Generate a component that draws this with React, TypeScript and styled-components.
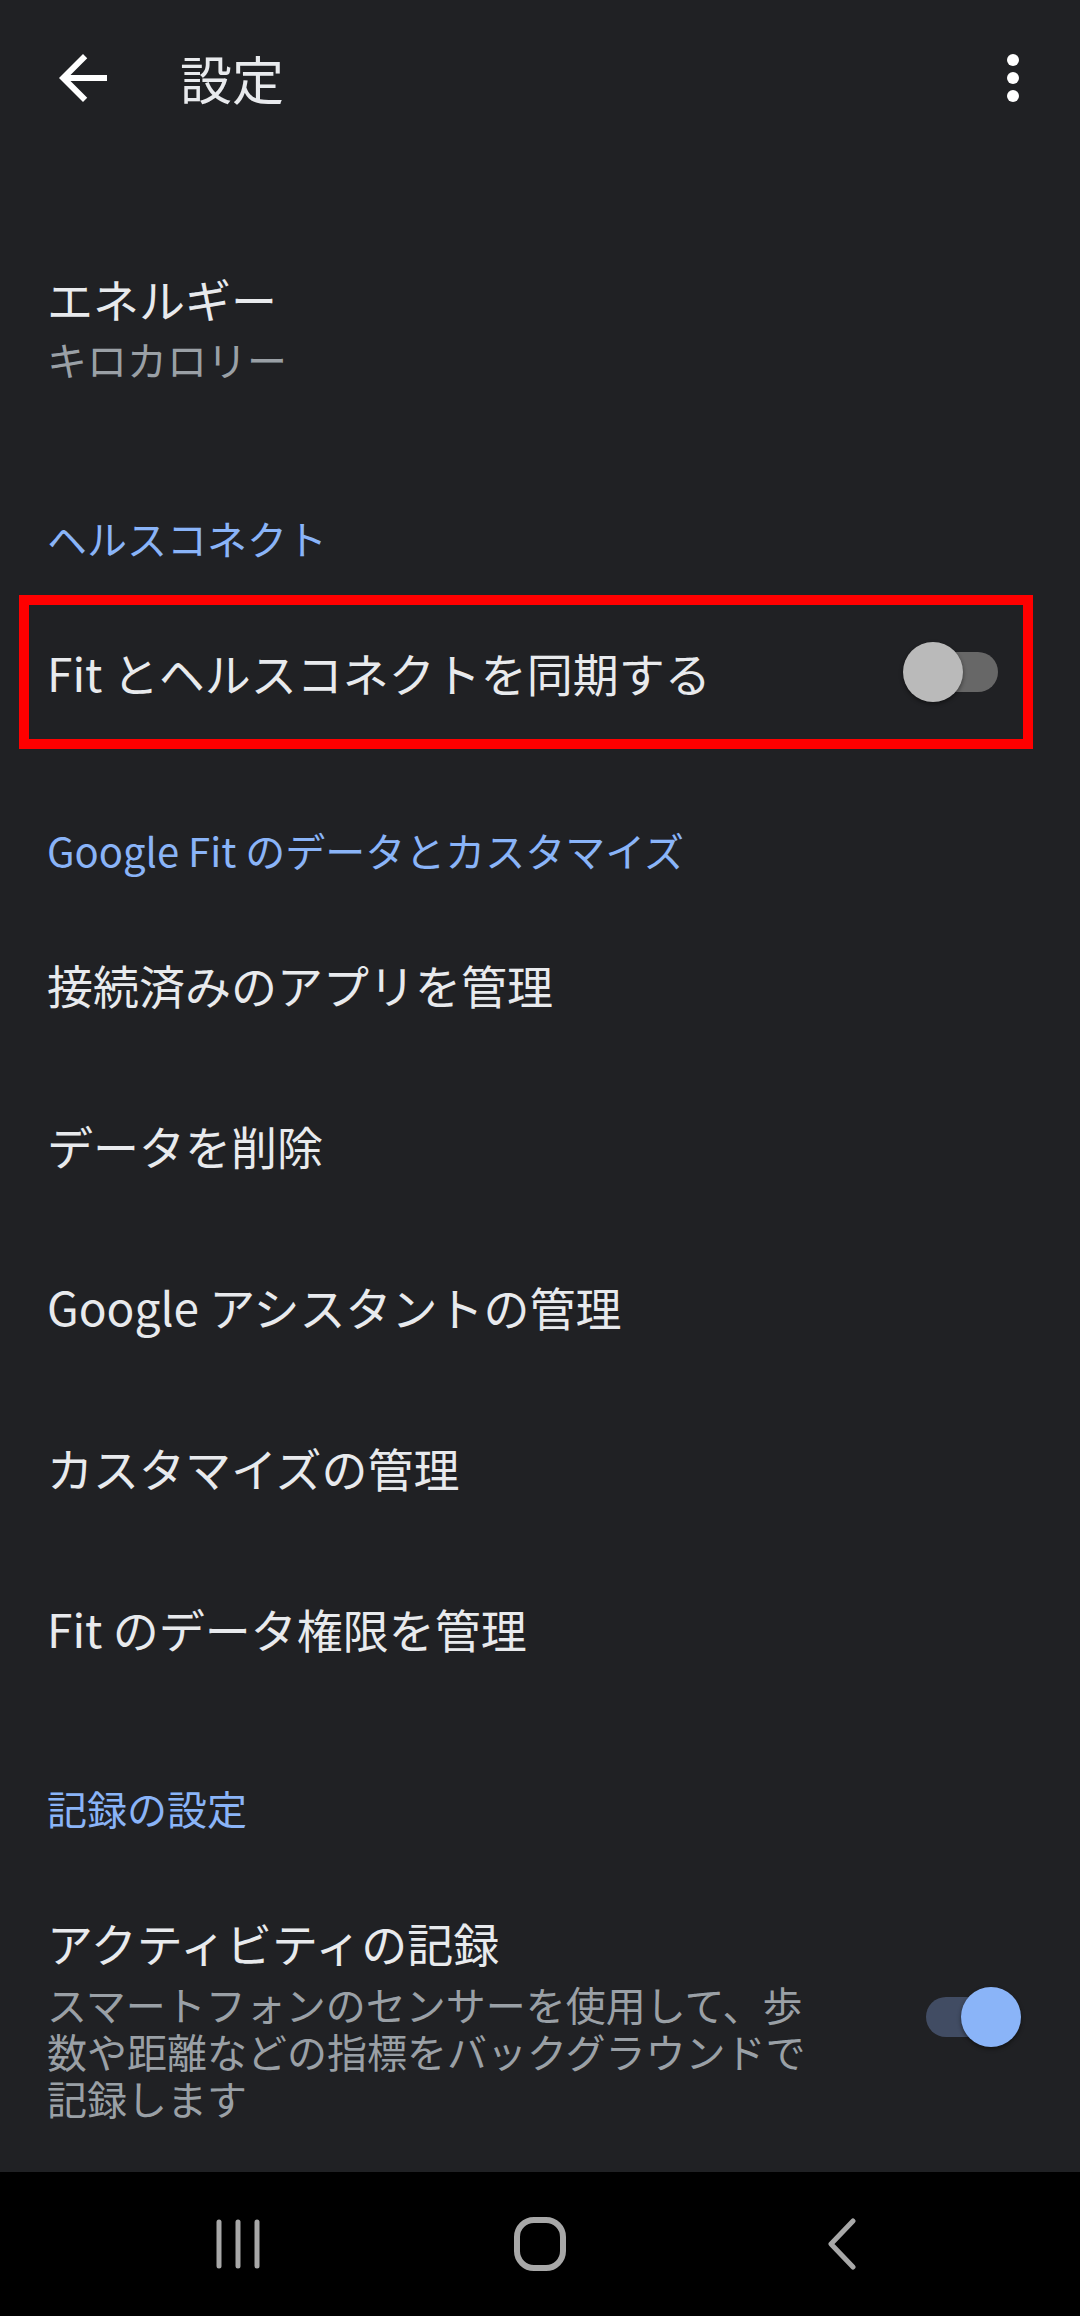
import styled, { createGlobalStyle } from 'styled-components';

const GlobalStyle = createGlobalStyle`
  html, body {
    margin: 0;
    padding: 0;
    background: #202124;
  }
  body {
    font-family: "Noto Sans CJK JP", "Noto Sans", sans-serif;
    -webkit-font-smoothing: antialiased;
  }
  * {
    box-sizing: border-box;
  }
`;

const Screen = styled.div`
  width: 1080px;
  height: 2316px;
  display: flex;
  flex-direction: column;
  background: #202124;
  color: #e8eaed;
  overflow: hidden;
`;

const AppBar = styled.header`
  height: 156px;
  flex-shrink: 0;
  display: flex;
  align-items: center;
  padding: 0 31px 0 47px;
`;

const IconButton = styled.button`
  width: 72px;
  height: 72px;
  padding: 0;
  border: none;
  background: none;
  color: #ffffff;
  display: flex;
  align-items: center;
  justify-content: center;
`;

const Title = styled.h1`
  flex: 1;
  margin: 0 0 0 61px;
  font-size: 52px;
  font-weight: 400;
  line-height: 1;
  color: #e8eaed;
`;

const List = styled.main`
  flex: 1;
  padding-top: 84px;
`;

const SectionHeader = styled.div<{ $top: number; $bottom: number }>`
  padding: ${({ $top }) => $top}px 47px ${({ $bottom }) => $bottom}px;
  font-size: 40px;
  line-height: 52px;
  color: #8ab4f8;
`;

const TwoLineItem = styled.div`
  display: flex;
  align-items: center;
  justify-content: space-between;
  padding: 28px 59px 28px 47px;
`;

const TextBlock = styled.div<{ $width?: number }>`
  width: ${({ $width }) => ($width ? `${$width}px` : 'auto')};
`;

const ItemTitle = styled.div`
  font-size: 46px;
  line-height: 60px;
  color: #e8eaed;
`;

const ItemSummary = styled.div<{ $dense?: boolean }>`
  font-size: 40px;
  line-height: ${({ $dense }) => ($dense ? '47px' : '62px')};
  margin-top: ${({ $dense }) => ($dense ? '9px' : '0')};
  color: #9aa0a6;
`;

const SingleItem = styled.div`
  height: 161px;
  display: flex;
  align-items: center;
  padding-left: 47px;
  font-size: 46px;
  color: #e8eaed;
`;

const HighlightFrame = styled.div`
  margin: 0 47px 0 19px;
  border: 10px solid #ff0000;
`;

const FrameRow = styled.div`
  height: 134px;
  display: flex;
  align-items: center;
  justify-content: space-between;
  padding: 0 17px 0 18px;
  font-size: 46px;
  color: #e8eaed;
`;

const Switch = styled.div`
  position: relative;
  width: 103px;
  height: 60px;
  flex-shrink: 0;
`;

const Track = styled.div<{ $on: boolean }>`
  position: absolute;
  left: 8px;
  right: 8px;
  top: 10px;
  height: 40px;
  border-radius: 20px;
  background: ${({ $on }) => ($on ? '#414c63' : '#676767')};
`;

const Thumb = styled.div<{ $on: boolean }>`
  position: absolute;
  top: 0;
  ${({ $on }) => ($on ? 'right: 0;' : 'left: 0;')}
  width: 60px;
  height: 60px;
  border-radius: 50%;
  background: ${({ $on }) => ($on ? '#8ab4f8' : '#bababa')};
  box-shadow: 0 2px 4px rgba(0, 0, 0, 0.45);
`;

const NavBar = styled.nav`
  height: 144px;
  flex-shrink: 0;
  background: #000000;
  display: grid;
  grid-template-columns: repeat(3, 302px);
  justify-content: center;
  align-items: center;
  justify-items: center;
  color: #a8a8a8;
`;

function Toggle({ on }: { on: boolean }) {
  return (
    <Switch>
      <Track $on={on} />
      <Thumb $on={on} />
    </Switch>
  );
}

const items = [
  '接続済みのアプリを管理',
  'データを削除',
  'Google アシスタントの管理',
  'カスタマイズの管理',
  'Fit のデータ権限を管理',
];

export default function App() {
  return (
    <>
      <GlobalStyle />
      <Screen>
        <AppBar>
          <IconButton aria-label="戻る">
            <svg width="72" height="72" viewBox="0 0 24 24" fill="currentColor">
              <path d="M20 11H7.83l5.59-5.59L12 4l-8 8 8 8 1.41-1.41L7.83 13H20v-2z" />
            </svg>
          </IconButton>
          <Title>設定</Title>
          <IconButton aria-label="その他">
            <svg width="72" height="72" viewBox="0 0 24 24" fill="currentColor">
              <circle cx="12" cy="6" r="2" />
              <circle cx="12" cy="12" r="2" />
              <circle cx="12" cy="18" r="2" />
            </svg>
          </IconButton>
        </AppBar>

        <List>
          <TwoLineItem>
            <TextBlock>
              <ItemTitle>エネルギー</ItemTitle>
              <ItemSummary>キロカロリー</ItemSummary>
            </TextBlock>
          </TwoLineItem>

          <SectionHeader $top={94} $bottom={31}>
            ヘルスコネクト
          </SectionHeader>
          <HighlightFrame>
            <FrameRow>
              <span>Fit とヘルスコネクトを同期する</span>
              <Toggle on={false} />
            </FrameRow>
          </HighlightFrame>

          <SectionHeader $top={75} $bottom={27}>
            Google Fit のデータとカスタマイズ
          </SectionHeader>
          {items.map((label) => (
            <SingleItem key={label}>{label}</SingleItem>
          ))}

          <SectionHeader $top={74} $bottom={50}>
            記録の設定
          </SectionHeader>
          <TwoLineItem>
            <TextBlock $width={790}>
              <ItemTitle>アクティビティの記録</ItemTitle>
              <ItemSummary $dense>
                スマートフォンのセンサーを使用して、歩数や距離などの指標をバックグラウンドで記録します
              </ItemSummary>
            </TextBlock>
            <Toggle on />
          </TwoLineItem>
        </List>

        <NavBar>
          <svg width="46" height="50" viewBox="0 0 46 50" fill="none" stroke="currentColor" strokeWidth="5" strokeLinecap="round">
            <line x1="4" y1="3" x2="4" y2="47" />
            <line x1="23" y1="3" x2="23" y2="47" />
            <line x1="42" y1="3" x2="42" y2="47" />
          </svg>
          <svg width="54" height="56" viewBox="0 0 54 56" fill="none" stroke="currentColor" strokeWidth="6">
            <rect x="4" y="4" width="46" height="48" rx="17" />
          </svg>
          <svg width="30" height="52" viewBox="0 0 30 52" fill="none" stroke="currentColor" strokeWidth="5" strokeLinecap="round" strokeLinejoin="round">
            <polyline points="26,3 4,26 26,49" />
          </svg>
        </NavBar>
      </Screen>
    </>
  );
}
